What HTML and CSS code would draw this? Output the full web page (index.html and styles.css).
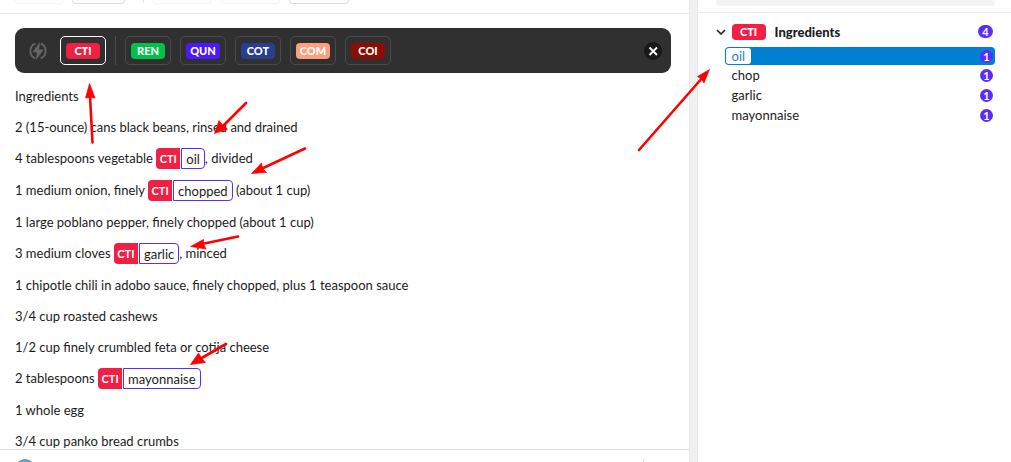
FILE: index.html
```
<!DOCTYPE html>
<html lang="en">
<head>
<meta charset="utf-8">
<title>Recipe annotation</title>
<link rel="stylesheet" href="styles.css">
</head>
<body>
<div class="app">
  <main class="editor">
    <div class="tabs">
      <span class="tab tab-faint"></span>
      <span class="tab tab-narrow"></span>
      <span class="tab-rule"></span>
      <span class="tab tab-wide tab-faint"></span>
      <span class="tab tab-wide tab-faint"></span>
      <span class="tab tab-wide"></span>
    </div>
    <div class="document">
      <div class="toolbar">
        <svg class="bolt" viewBox="0 0 18 18" aria-hidden="true">
          <path d="M6.3 1.6A8 8 0 0 0 6.3 16.4M11.7 1.6A8 8 0 0 1 11.7 16.4" fill="none" stroke="#666" stroke-width="1.8"/>
          <path d="M11 0 3.4 10.300H7.800L7 18 14.800 7.400H10Z" fill="#666"/>
        </svg>
        <button class="tool tool-active"><span class="chip cti">CTI</span></button>
        <span class="tool-rule"></span>
        <button class="tool"><span class="chip ren">REN</span></button>
        <button class="tool"><span class="chip qun">QUN</span></button>
        <button class="tool"><span class="chip cot">COT</span></button>
        <button class="tool"><span class="chip com">COM</span></button>
        <button class="tool"><span class="chip coi">COI</span></button>
        <button class="close" aria-label="Close">
          <svg viewBox="0 0 18 18" aria-hidden="true"><path d="m5.500 5.500 7.500 7.500m0-7.500L5.500 13" fill="none" stroke="#fff" stroke-width="1.900"/></svg>
        </button>
      </div>
      <div class="recipe">
        <p>Ingredients</p>
        <p>2 (15-ounce) cans black beans, rinsed and drained</p>
        <p class="tagged">4 tablespoons vegetable <span class="tag"><b>CTI</b><span>oil</span></span>, divided</p>
        <p class="tagged">1 medium onion, finely <span class="tag"><b>CTI</b><span>chopped</span></span> (about 1 cup)</p>
        <p>1 large poblano pepper, finely chopped (about 1 cup)</p>
        <p class="tagged">3 medium cloves <span class="tag"><b>CTI</b><span>garlic</span></span>, minced</p>
        <p>1 chipotle chili in adobo sauce, finely chopped, plus 1 teaspoon sauce</p>
        <p>3/4 cup roasted cashews</p>
        <p>1/2 cup finely crumbled feta or cotija cheese</p>
        <p class="tagged">2 tablespoons <span class="tag"><b>CTI</b><span>mayonnaise</span></span></p>
        <p>1 whole egg</p>
        <p>3/4 cup panko bread crumbs</p>
      </div>
    </div>
    <footer class="footer"><span class="avatar"></span><span class="footer-rule"></span></footer>
  </main>
  <div class="gutter"></div>
  <aside class="panel">
    <div class="search"><span class="search-box"></span></div>
    <div class="group">
      <button class="group-head">
        <svg class="chevron" viewBox="0 0 10 6" aria-hidden="true"><path d="m1 1 4 4 4-4" fill="none" stroke="#222" stroke-width="1.6"/></svg>
        <span class="chip cti">CTI</span>
        <span class="group-name">Ingredients</span>
        <span class="count count-wide">4</span>
      </button>
      <ul class="terms">
        <li class="term selected"><span class="term-name">oil</span><span class="count">1</span></li>
        <li class="term"><span class="term-name">chop</span><span class="count">1</span></li>
        <li class="term"><span class="term-name">garlic</span><span class="count">1</span></li>
        <li class="term"><span class="term-name">mayonnaise</span><span class="count">1</span></li>
      </ul>
    </div>
  </aside>
</div>
<svg class="arrows" width="1011" height="462" aria-hidden="true">
  <g stroke="#f00" stroke-width="2.6" stroke-linecap="round">
    <path d="M92.500 142.500 90 96M246 103 222 127M305 148.500 261 169M238 236.500 202 244M226 344 200 359M639 150 703 77"/>
  </g>
  <g fill="#f00" stroke="#f00" stroke-width="0.7" stroke-linejoin="round">
    <path d="M89.500 83.500 85.500 98 90 97.500 95 98Z"/>
    <path d="M214.500 133.500 219 120.500 223 125.500 227.500 129Z"/>
    <path d="M251.500 173.500 261.500 163 262.500 168.500 266.500 172.500Z"/>
    <path d="M190.500 246.500 203.500 239.500 203.500 244 206 249Z"/>
    <path d="M190.500 364.500 198.500 353 201.500 358 205.500 362.500Z"/>
    <path d="M709.500 69.500 697.500 76.500 701.500 79 704 83Z"/>
  </g>
</svg>
</body>
</html>
```
FILE: styles.css
```
* { box-sizing: border-box; }
body {
  margin: 0;
  background: #fff;
  color: #1c1c1c;
  font-family: Lato, "Open Sans", sans-serif;
  font-size: 13px;
}
button { font: inherit; color: inherit; cursor: pointer; }
.app {
  display: grid;
  grid-template-columns: minmax(0, 1fr) 9px 31%;
  height: 100vh;
  overflow: hidden;
}
.editor { display: flex; flex-direction: column; min-height: 0; }
.tabs {
  display: flex;
  flex: none;
  gap: 9px;
  height: 14px;
  padding-left: 15px;
  border-bottom: 1px solid #ebebeb;
}
.tab {
  width: 48px;
  height: 4px;
  border: 1px solid #ddd;
  border-top: 0;
  border-radius: 0 0 4px 4px;
}
.tab-narrow { width: 53px; }
.tab-wide { width: 60px; }
.tab-wide.tab-faint { width: 59px; }
.tab-faint { border-color: #f4f4f4; }
.tab-rule { width: 1px; height: 3px; margin: 0 0 0 9px; background: #e4e4e4; }
.document { flex: 1; min-height: 0; overflow: hidden; padding: 14px 18px 0 15px; }
.toolbar {
  display: flex;
  align-items: center;
  gap: 9px;
  height: 45px;
  padding: 0 9px 0 14px;
  border-radius: 9px;
  background: #303030;
}
.bolt { width: 18px; height: 18px; margin-right: 4px; }
.tool {
  display: flex;
  align-items: center;
  justify-content: center;
  width: 46px;
  height: 29px;
  padding: 0;
  border: 1px solid #4b4b4b;
  border-radius: 5px;
  background: none;
}
.tool-active { border-color: #fff; }
.tool-rule { width: 1px; height: 29px; background: #4b4b4b; }
.chip {
  width: 34px;
  height: 16px;
  border-radius: 4px;
  color: #fff;
  font-size: 11px;
  font-weight: 900;
  line-height: 16px;
  text-align: center;
}
.cti { background: #f02045; }
.ren { background: #00c24b; }
.qun { background: #4b19ff; }
.cot { background: #273f8c; }
.com { background: #ff9f7c; }
.coi { background: #8b0d03; }
.close {
  width: 18px;
  height: 18px;
  margin-left: auto;
  padding: 0;
  border: 0;
  border-radius: 50%;
  background: #181818;
}
.close svg { display: block; width: 18px; height: 18px; }
.recipe { padding-top: 7px; }
.recipe p { display: flex; align-items: center; height: 31px; margin: 0; white-space: pre; }
.recipe .tagged { height: 32px; }
.tag { display: inline-flex; gap: 1px; height: 21px; line-height: 21px; }
.tag b {
  width: 24px;
  border-radius: 4px 0 0 4px;
  background: #f02045;
  color: #fff;
  font-size: 11px;
  text-align: center;
}
.tag span { padding: 0 4px; border: 1px solid #5a2dff; border-radius: 0 4px 4px 0; }
.footer {
  display: flex;
  flex: none;
  justify-content: space-between;
  height: 13px;
  padding: 9px 45px 0 15px;
  border-top: 1px solid #e2e2e2;
  overflow: hidden;
}
.avatar { width: 20px; height: 20px; border-radius: 50%; background: #55a5d8; }
.footer-rule { width: 1px; height: 20px; background: #ddd; }
.gutter { border: 1px solid #e8e8e8; border-width: 0 1px; background: #f0f0f0; }
.search { height: 13px; padding: 0 16px 0 18px; border-bottom: 1px solid #ebebeb; }
.search-box { display: block; height: 6px; border-radius: 0 0 4px 4px; background: #f4f4f4; }
.group { padding: 9px 16px 0 18px; }
.group-head {
  display: flex;
  align-items: center;
  width: 100%;
  height: 19px;
  padding: 0 2px 0 0;
  border: 0;
  background: none;
  text-align: left;
}
.chevron { width: 10px; height: 6px; margin-right: 6px; }
.group-name { margin-left: 9px; font-weight: 900; }
.count {
  width: 13px;
  height: 13px;
  margin-left: auto;
  border-radius: 7px;
  background: #5a2dff;
  color: #fff;
  font-size: 11px;
  font-weight: 700;
  line-height: 13px;
  text-align: center;
}
.count-wide { width: 15px; }
.terms { margin: 6px 0 0 9px; padding: 0; list-style: none; }
.term { display: flex; align-items: center; height: 20px; padding: 0 2px 0 1px; }
.term-name { padding: 0 6px; line-height: 16px; }
.selected { height: 18px; border-radius: 4px; background: #0080d0; }
.selected .term-name { border-radius: 3px; background: #fff; color: #1b7fc9; }
.arrows { position: absolute; top: 0; left: 0; pointer-events: none; }
```
